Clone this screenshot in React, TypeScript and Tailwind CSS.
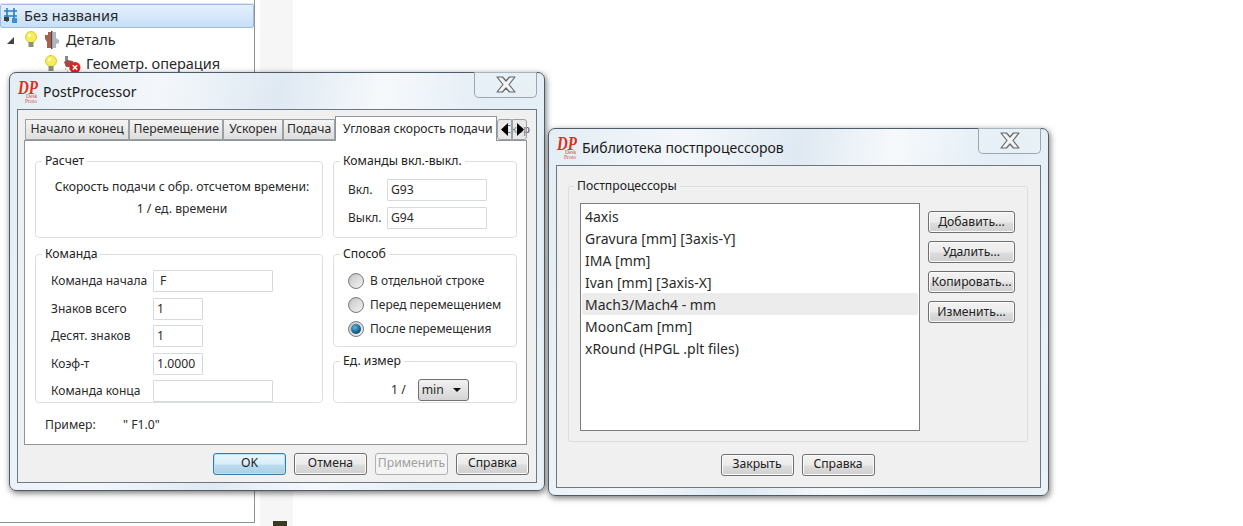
import React from "react";

const font = "font-['Noto_Sans',sans-serif]";

function Logo() {
  return (
    <svg width="32" height="30" viewBox="-6 -4 32 30" className="shrink-0 -my-[4px] -mx-[6px]">
      <text x="0" y="12.5" fontFamily="'Liberation Serif', serif" fontWeight="700" fontStyle="italic" fontSize="18" fill="#d8321e" textLength="20" lengthAdjust="spacingAndGlyphs">DP</text>
      <text x="8" y="17" fontFamily="'Liberation Serif', serif" fontSize="5.5" fill="#c8503c">Desk</text>
      <text x="7" y="21.5" fontFamily="'Liberation Serif', serif" fontSize="5.5" fill="#c8503c">Proto</text>
    </svg>
  );
}

function CloseX() {
  return (
    <svg width="20" height="17" viewBox="0 0 20 17">
      <path d="M1 1H6.5L10 5L13.5 1H19L13 8.5L19 16H13.5L10 12L6.5 16H1L7 8.5Z" fill="#f1f3f5" stroke="#62676b" strokeWidth="1.2" strokeLinejoin="round" />
    </svg>
  );
}

function Win({ className, title, children }: { className: string; title: string; children: React.ReactNode }) {
  return (
    <div className={`absolute rounded-[7px] border border-[#4f5b66] bg-[linear-gradient(100deg,#e4edf5_0%,#f3f7fb_25%,#dfe9f2_45%,#f6f9fc_62%,#e3edf5_80%,#eaf2f8_100%)] px-[7px] pb-[7px] shadow-[1px_2px_6px_rgba(0,0,0,0.55)] flex flex-col ${className}`}>
      <div className="h-[36px] shrink-0 flex items-start relative">
        <div className="flex items-center gap-[5px] pl-[1px] pt-[8px]">
          <Logo />
          <span className="text-[14px] text-[#1a1a1a] leading-[22px]">{title}</span>
        </div>
        <div className="absolute right-0 -top-px w-[63px] h-[26px] rounded-b-[5px] border border-t-0 border-[#9aa6b1] bg-[#eaf1f7]/60 flex items-center justify-center">
          <CloseX />
        </div>
      </div>
      <div className="flex-1 min-h-0 border border-[#6e7880] bg-[#f0f0f0] flex flex-col">{children}</div>
    </div>
  );
}

function Btn({ children, className = "", kind = "normal" }: { children: React.ReactNode; className?: string; kind?: "normal" | "default" | "disabled" }) {
  const k =
    kind === "default"
      ? "border-[#3a7ea8] bg-[linear-gradient(#eaf6fc_0%,#d9eefa_50%,#bcdcee_55%,#a8cfe6_100%)] text-[#222] shadow-[inset_0_0_0_1px_#b5e1f5]"
      : kind === "disabled"
      ? "border-[#adb2b5] bg-[#f4f4f4] text-[#a0a0a0]"
      : "border-[#707070] bg-[linear-gradient(#f2f2f2_0%,#ebebeb_50%,#dddddd_55%,#cfcfcf_100%)] text-[#222] shadow-[inset_0_0_0_1px_#fbfbfb]";
  return (
    <div className={`w-[73px] h-[22px] rounded-[3px] border flex items-center justify-center text-[12.2px] whitespace-nowrap ${k} ${className}`}>
      {children}
    </div>
  );
}

function Group({ title, className = "", children }: { title: string; className?: string; children: React.ReactNode }) {
  return (
    <fieldset className={`border border-[#dcdfe1] rounded-[4px] ${className}`}>
      <legend className="ml-[6px] px-[3px] text-[12.2px] leading-[16px] text-[#222]">{title}</legend>
      {children}
    </fieldset>
  );
}

function Field({ v, w }: { v: string; w: string }) {
  return <div className={`h-[22px] border border-[#d6dade] rounded-[1px] bg-white text-[12.2px] leading-[20px] text-[#2a2a2a] ${w}`}>{v}</div>;
}

function Radio({ on, label }: { on?: boolean; label: string }) {
  return (
    <div className="flex items-center gap-[6px] h-[24px]">
      <div className="w-[16px] h-[16px] rounded-full border border-[#7c7c7c] bg-[linear-gradient(135deg,#bdbdbd,#f6f6f6)] flex items-center justify-center">
        {on ? (
          <div className="w-[10px] h-[10px] rounded-full bg-[radial-gradient(circle_at_40%_35%,#58b8e0,#0a4f7a_70%)]" />
        ) : (
          <div className="w-[11px] h-[11px] rounded-full bg-[linear-gradient(135deg,#cfcfcf,#ededed)]" />
        )}
      </div>
      <span className="text-[12px] text-[#2a2a2a] whitespace-nowrap">{label}</span>
    </div>
  );
}

function Tab({ w, children, active }: { w: string; children: React.ReactNode; active?: boolean }) {
  return active ? (
    <div className={`${w} h-[25px] -mb-px -mt-[3px] z-10 border border-b-0 border-[#8e9499] bg-white pl-[3px] flex items-center justify-center text-[12.2px] text-[#2a2a2a] whitespace-nowrap`}>{children}</div>
  ) : (
    <div className={`${w} h-[21px] border border-[#9aa0a4] bg-[linear-gradient(#f4f4f4,#dedede)] flex items-center justify-center text-[12.2px] text-[#2a2a2a] whitespace-nowrap overflow-hidden`}>{children}</div>
  );
}

function FormRow({ label, v, w }: { label: string; v: string; w: string }) {
  return (
    <div className="flex items-center">
      <span className="w-[102px] text-[12px] text-[#2a2a2a] whitespace-nowrap">{label}</span>
      <Field v={v} w={w} />
    </div>
  );
}

function PostProcessor() {
  return (
    <Win className="left-[9px] top-[72px] w-[536px] h-[419px]" title="PostProcessor">
      <div className="flex-1 min-h-0 pl-[6px] pr-[9px] pt-[9px] flex flex-col">
        <div className="flex h-[21px] shrink-0 items-start relative ml-[1px]">
          <Tab w="w-[105px]">Начало и конец</Tab>
          <Tab w="w-[95px]">Перемещение</Tab>
          <Tab w="w-[60px]">Ускорен</Tab>
          <Tab w="w-[53px]">Подача</Tab>
          <Tab w="w-[163px]" active>Угловая скорость подачи</Tab>
          <div className="relative w-[30px] h-[21px] flex shrink-0">
            <span className="absolute left-[7px] top-[2px] text-[11px] leading-[16px] text-[#555]">Скор</span>
            <div className="relative w-[15px] h-[21px] border border-[#9aa0a4] rounded-l-[3px] bg-[#d8d8d8]/30 flex items-center justify-center">
              <svg width="8" height="13" viewBox="0 0 8 13"><path d="M7 0V13L0 6.5Z" fill="#000" /></svg>
            </div>
            <div className="relative w-[15px] h-[21px] border border-[#9aa0a4] rounded-r-[3px] bg-[#d8d8d8]/30 flex items-center justify-center">
              <svg width="8" height="13" viewBox="0 0 8 13"><path d="M1 0V13L8 6.5Z" fill="#000" /></svg>
            </div>
          </div>
        </div>
        <div className="flex-1 min-h-0 border border-[#8e9499] bg-white pl-[10px] pt-[12px] flex flex-col">
          <div className="grid grid-cols-[288px_184px] gap-x-[10px] grid-rows-[85px_157px] gap-y-[8px]">
            <Group title="Расчет" className="flex flex-col items-center text-[12.2px] text-[#2a2a2a]">
              <div className="pt-[7px] pl-[6px] leading-[22px] text-center">
                Скорость подачи с обр. отсчетом времени:
                <br />1 / ед. времени
              </div>
            </Group>
            <Group title="Команды вкл.-выкл.">
              <div className="flex flex-col gap-[6px] pt-[10px] pl-[14px]">
                <div className="flex items-center"><span className="w-[39px] text-[12px] text-[#2a2a2a]">Вкл.</span><Field v="G93" w="w-[100px] pl-[3px]" /></div>
                <div className="flex items-center"><span className="w-[39px] text-[12px] text-[#2a2a2a]">Выкл.</span><Field v="G94" w="w-[100px] pl-[3px]" /></div>
              </div>
            </Group>
            <Group title="Команда">
              <div className="flex flex-col gap-[5.5px] pt-[8px] pl-[15px]">
                <FormRow label="Команда начала" v="F" w="w-[120px] pl-[6px]" />
                <FormRow label="Знаков всего" v="1" w="w-[50px] pl-[3px]" />
                <FormRow label="Десят. знаков" v="1" w="w-[50px] pl-[3px]" />
                <FormRow label="Коэф-т" v="1.0000" w="w-[50px] pl-[3px]" />
                <FormRow label="Команда конца" v="" w="w-[120px] pl-[3px]" />
              </div>
            </Group>
            <div className="flex flex-col gap-[6px]">
              <Group title="Способ" className="h-[101px]">
                <div className="pt-[7px] pl-[14px]">
                  <Radio label="В отдельной строке" />
                  <Radio label="Перед перемещением" />
                  <Radio on label="После перемещения" />
                </div>
              </Group>
              <Group title="Ед. измер" className="flex-1">
                <div className="flex items-center pl-[57px] pt-[10px] gap-[12px] text-[12.2px] text-[#2a2a2a]">
                  <span>1 /</span>
                  <div className="w-[51px] h-[22px] rounded-[3px] border border-[#707070] bg-[linear-gradient(#f2f2f2,#d4d4d4)] flex items-center justify-between pl-[3px] pr-[7px]">
                    <span>min</span>
                    <svg width="8" height="4" viewBox="0 0 8 4"><path d="M0 0H8L4 4Z" fill="#111" /></svg>
                  </div>
                </div>
              </Group>
            </div>
          </div>
          <div className="flex items-center h-[16px] mt-[14px] pl-[10px] text-[12.2px] text-[#2a2a2a]">
            <span className="w-[78px]">Пример:</span>
            <span>" F1.0"</span>
          </div>
        </div>
        <div className="h-[37px] shrink-0 flex items-center justify-end -mr-[2px]">
          <div className="flex gap-[8px] items-center">
            <Btn kind="default">OK</Btn>
            <Btn>Отмена</Btn>
            <Btn kind="disabled">Применить</Btn>
            <Btn>Справка</Btn>
          </div>
        </div>
      </div>
    </Win>
  );
}

const items = ["4axis", "Gravura [mm] [3axis-Y]", "IMA [mm]", "Ivan [mm] [3axis-X]", "Mach3/Mach4 - mm", "MoonCam [mm]", "xRound (HPGL .plt files)"];

function Library() {
  return (
    <Win className="left-[548px] top-[128px] w-[501px] h-[368px]" title="Библиотека постпроцессоров">
      <div className="pl-[11px] pr-[12px] pt-[12px] flex-1 flex flex-col">
        <fieldset className="h-[264px] border border-[#dcdfe1] rounded-[2px]">
          <legend className="ml-[5px] px-[3px] text-[12.2px] leading-[16px] text-[#222]">Постпроцессоры</legend>
          <div className="flex gap-[8px] pt-[9px] pl-[11px]">
            <div className="w-[340px] h-[228px] border border-[#7d7d7d] bg-white px-[1px] pt-[1px]">
              {items.map((t, i) => (
                <div key={t} className={`h-[22px] pl-[3px] flex items-center text-[14px] text-[#2a2a2a] ${i === 4 ? "bg-[#ececec] rounded-[2px]" : ""}`}>{t}</div>
              ))}
            </div>
            <div className="flex flex-col gap-[8px] pt-[8px]">
              <Btn className="w-[87px]!">Добавить...</Btn>
              <Btn className="w-[87px]!">Удалить...</Btn>
              <Btn className="w-[87px]!">Копировать...</Btn>
              <Btn className="w-[87px]!">Изменить...</Btn>
            </div>
          </div>
        </fieldset>
        <div className="flex-1 flex justify-center items-center gap-[8px] pr-[1px]">
          <Btn>Закрыть</Btn>
          <Btn>Справка</Btn>
        </div>
      </div>
    </Win>
  );
}

function Bulb() {
  return (
    <svg width="14" height="18" viewBox="0 0 14 18">
      <circle cx="7" cy="6" r="5.5" fill="#f6ee56" stroke="#d9c93a" />
      <rect x="4.5" y="11" width="5" height="5" fill="#8d8f78" />
      <circle cx="5.5" cy="4.5" r="1.5" fill="#fffde0" />
    </svg>
  );
}

function Tree() {
  return (
    <div className="flex h-[526px] w-[293px]">
      <div className="w-[255px] h-[523px] border-r border-b border-[#8d9499] bg-white flex flex-col overflow-hidden">
        <div className="h-[4px] shrink-0 border-b border-[#e4e4e4]" />
        <div className="h-[24px] shrink-0 border border-[#9dbfe2] rounded-[2px] bg-[linear-gradient(#e4f0fc,#c7dff7)] flex items-center pl-[2px] gap-[6px] text-[14.5px] text-[#2a2a2a]">
          <svg width="15" height="18" viewBox="0 0 15 18">
            <path d="M1 4H14M1 9H14M4 1V15M11 1V15" stroke="#2b7fc4" strokeWidth="1.6" fill="none" />
            <rect x="1" y="10" width="5" height="4" fill="#3a3f4a" />
            <rect x="9" y="11" width="5" height="5" fill="#3a8fd0" />
          </svg>
          Без названия
        </div>
        <div className="h-[24px] shrink-0 flex items-center pl-[6px] text-[14.5px] text-[#2a2a2a]">
          <svg width="9" height="9" viewBox="0 0 9 9" className="mr-[9px]"><path d="M8 1V8H1Z" fill="#444" /></svg>
          <Bulb />
          <svg width="16" height="18" viewBox="0 0 16 18" className="ml-[6px] mr-[6px]">
            <path d="M1 4H4V1H7V17H3V11L1 8Z" fill="#a8604f" />
            <rect x="7" y="0" width="1.5" height="18" fill="#4a4a4a" />
            <path d="M9 1H12V7L15 9V12L12 13V17H9Z" fill="#aeb6c2" />
          </svg>
          Деталь
        </div>
        <div className="h-[24px] shrink-0 flex items-center pl-[44px] text-[14.5px] text-[#2a2a2a]">
          <Bulb />
          <svg width="18" height="19" viewBox="0 0 18 19" className="ml-[5px] mr-[5px]">
            <rect x="2" y="1" width="3" height="5" fill="#8a8a8a" />
            <path d="M1 7L4 5L10 6L11 12L3 12Z" fill="#a04a4a" />
            <path d="M2 14H3M4 16H5M6 14H7" stroke="#c06060" strokeWidth="1.2" />
            <circle cx="12" cy="12.5" r="5.5" fill="#d22" />
            <path d="M9.8 10.3L14.2 14.7M14.2 10.3L9.8 14.7" stroke="#fff" strokeWidth="1.6" />
          </svg>
          Геометр. операция
        </div>
      </div>
      <div className="flex-1 pl-[5px] flex">
        <div className="flex-1 bg-[#f6f6f6] flex flex-col justify-end items-center pl-[7px]">
          <div className="w-[14px] h-[5px] bg-[#3a3a20]" />
        </div>
      </div>
    </div>
  );
}

export default function App() {
  return (
    <div className={`relative w-[1243px] h-[526px] overflow-hidden bg-white ${font}`}>
      <Tree />
      <PostProcessor />
      <Library />
    </div>
  );
}
